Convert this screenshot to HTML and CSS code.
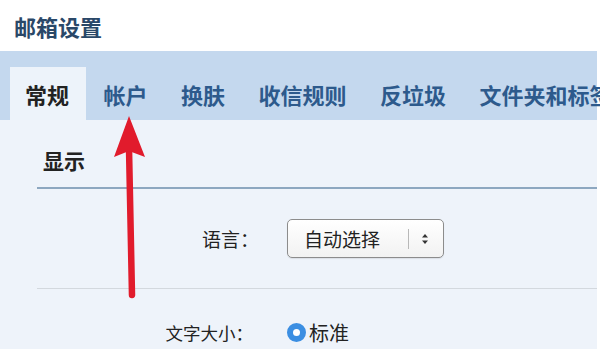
FILE: index.html
```html
<!DOCTYPE html>
<html lang="zh-CN">
<head>
    <meta charset="UTF-8">
    <meta name="viewport" content="width=device-width, initial-scale=1.0">
    <title>邮箱设置</title>
    <link rel="stylesheet" href="styles.css">
</head>
<body>
    <div class="page">
        <div class="header">邮箱设置</div>

        <div class="tabs">
            <div class="tab active">常规</div>
            <div class="tab">帐户</div>
            <div class="tab">换肤</div>
            <div class="tab">收信规则</div>
            <div class="tab">反垃圾</div>
            <div class="tab">文件夹和标签</div>
        </div>

        <div class="content">
            <div class="section-title">显示</div>

            <div class="row first">
                <div class="label">语言：</div>
                <div class="select">
                    <span class="select-text">自动选择</span>
                    <span class="select-sep"></span>
                    <span class="select-arrows">
                        <svg width="8" height="12" viewBox="0 0 8 12">
                            <path d="M4 1 L7 4.5 L1 4.5 Z" fill="#333"/>
                            <path d="M4 11 L7 7.5 L1 7.5 Z" fill="#333"/>
                        </svg>
                    </span>
                </div>
            </div>

            <div class="row second">
                <div class="label small">文字大小：</div>
                <div class="radio-wrap">
                    <span class="radio"></span>
                    <span class="radio-text">标准</span>
                </div>
            </div>
        </div>

        <svg class="arrow" width="600" height="349" viewBox="0 0 600 349">
            <line x1="132" y1="295" x2="129" y2="148" stroke="#e11b2c" stroke-width="6.5" stroke-linecap="round"/>
            <polygon points="129,116 145,157 129,151 114,157" fill="#e11b2c"/>
        </svg>
    </div>
</body>
</html>
```

FILE: styles.css
```css
body {
    margin: 0;
    background-color: #ffffff;
    font-family: "Noto Sans CJK SC", "Noto Sans", sans-serif;
}

.page {
    position: relative;
    width: 600px;
    height: 349px;
    overflow: hidden;
}

.header {
    height: 51px;
    padding-left: 14px;
    padding-top: 1px;
    box-sizing: border-box;
    display: flex;
    align-items: center;
    font-size: 22px;
    font-weight: bold;
    color: #2a4868;
    background-color: #ffffff;
}

.tabs {
    display: flex;
    align-items: flex-end;
    height: 69px;
    padding-left: 10px;
    margin-right: 3px;
    background-color: #c4d8ee;
    white-space: nowrap;
}

.tab {
    height: 53px;
    line-height: 55px;
    padding: 0 16px 0 16px;
    margin-right: 1.5px;
    font-size: 22px;
    font-weight: bold;
    color: #2d5a8c;
}

.tab.active {
    padding-left: 15px;
    padding-right: 17px;
    background-color: #edf3fa;
    color: #222222;
}

.content {
    height: 229px;
    margin-right: 3px;
    padding-left: 37px;
    background-color: #eef3fa;
}

.section-title {
    height: 69px;
    padding-left: 6px;
    padding-top: 13px;
    box-sizing: border-box;
    display: flex;
    align-items: center;
    font-size: 21px;
    font-weight: bold;
    color: #222222;
    border-bottom: 2px solid #8da7c0;
}

.row {
    display: grid;
    grid-template-columns: 213px auto;
    column-gap: 37px;
    align-items: center;
}

.row.first {
    height: 99px;
    border-bottom: 1px solid #d3d8de;
}

.row.second {
    padding-top: 29px;
    align-items: center;
}

.label {
    text-align: right;
    font-size: 19px;
    color: #222222;
    margin-right: -9px;
}

.label.small {
    font-size: 17.5px;
    margin-right: -3px;
}

.select {
    display: flex;
    align-items: center;
    width: 157px;
    height: 39px;
    box-sizing: border-box;
    border: 1px solid #8c8c8c;
    border-radius: 5px;
    background: linear-gradient(#ffffff, #f2f2f2);
    box-shadow: 0 1px 1px rgba(0, 0, 0, 0.08);
}

.select-text {
    padding-left: 16px;
    width: 104px;
    font-size: 19px;
    color: #222222;
}

.select-sep {
    width: 1px;
    height: 20px;
    background-color: #b8b8b8;
}

.select-arrows {
    display: flex;
    padding-left: 12px;
}

.radio-wrap {
    display: flex;
    align-items: center;
}

.radio {
    width: 19px;
    height: 19px;
    border-radius: 50%;
    background-color: #3b8ee2;
    box-sizing: border-box;
    border: 6px solid #3b8ee2;
    position: relative;
}

.radio::after {
    content: "";
    position: absolute;
    left: 0;
    top: 0;
    width: 7px;
    height: 7px;
    border-radius: 50%;
    background-color: #ffffff;
}

.radio-text {
    margin-left: 3px;
    font-size: 20px;
    color: #222222;
}

.arrow {
    position: absolute;
    left: 0;
    top: 0;
    pointer-events: none;
}
```
